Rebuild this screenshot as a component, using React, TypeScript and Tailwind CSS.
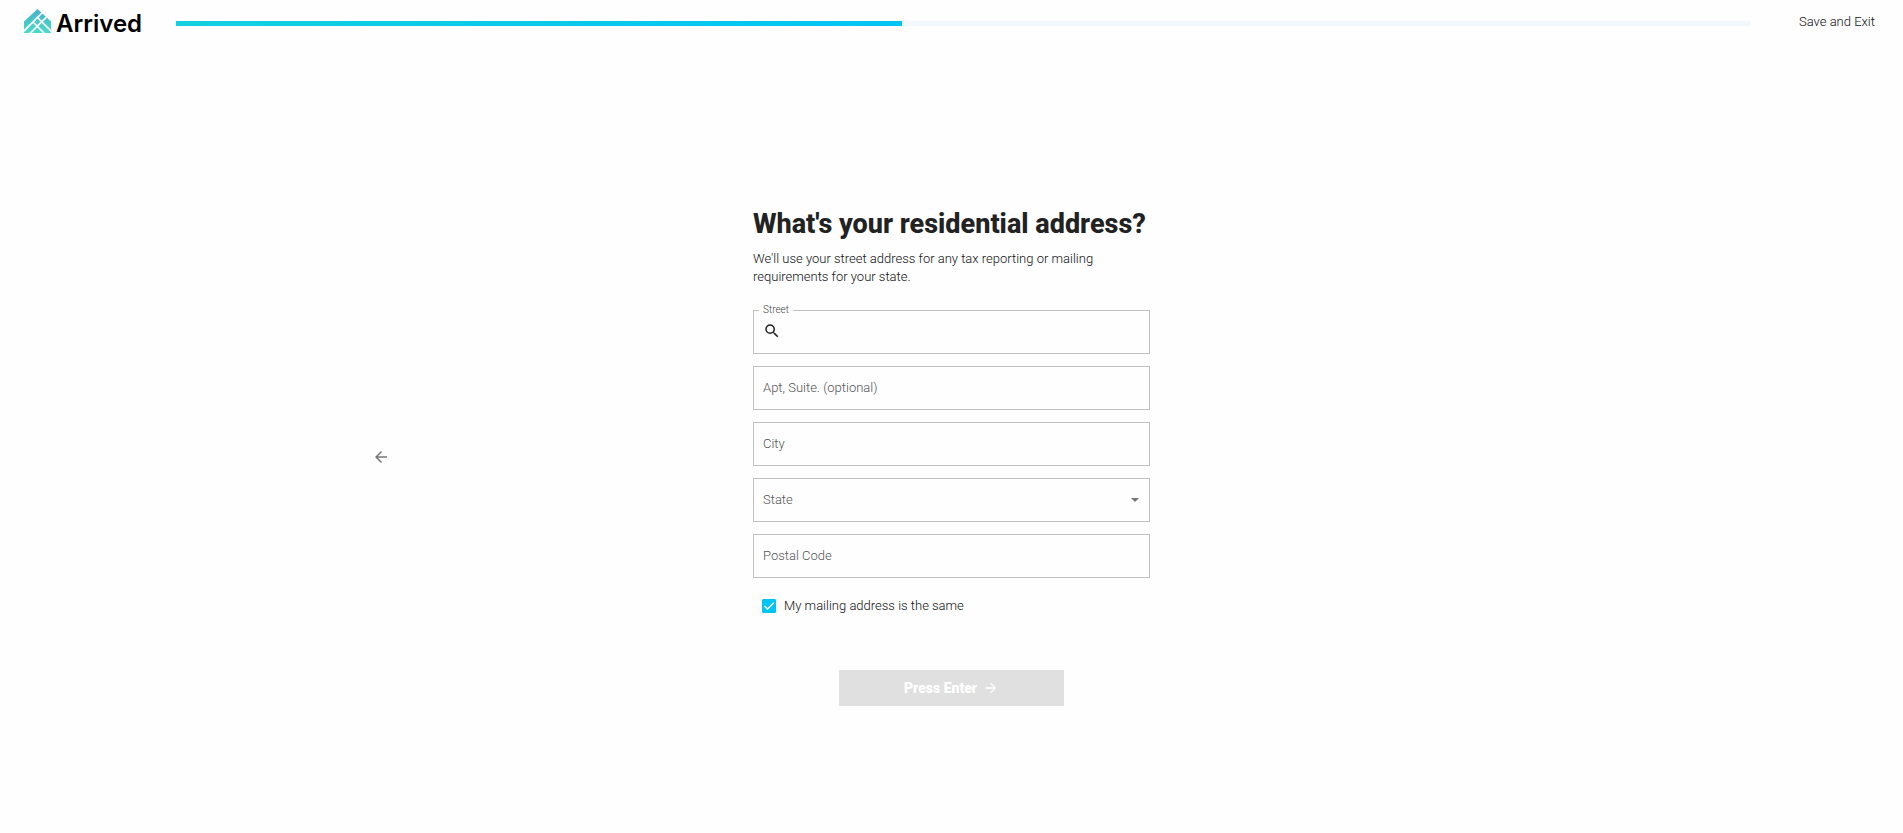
import { useState } from "react";
import type { ReactNode } from "react";

const BOX = "h-11 w-full border border-[#c0c0c0] bg-transparent px-[9px] text-[13px] text-[#222] outline-none focus:border-[#00c4f4]";
const LABEL = "pointer-events-none absolute inset-y-0 left-[10px] flex items-center text-[13px] font-light text-[#555]";

function Logo() {
  return (
    <a href="#home" className="flex items-start gap-[5px] text-black">
      <svg width="27" height="24" viewBox="0 0 27 24" aria-hidden="true">
        <defs>
          <linearGradient id="roof" x1="0" y1="0" x2="0" y2="1">
            <stop offset="0" stopColor="#46b0cc" />
            <stop offset="1" stopColor="#48dccb" />
          </linearGradient>
          <clipPath id="house">
            <path d="M13.5 0 L27 12.5 V24 H0 V12.5 Z" />
          </clipPath>
        </defs>
        <rect width="27" height="24" fill="url(#roof)" clipPath="url(#house)" />
        <g stroke="#fefefe" strokeWidth="1.7" fill="none">
          <path d="M-2 24 L22 0" />
          <path d="M5 25.5 L28 2.5" />
          <path d="M13 8 L30 25" />
          <path d="M8.5 12.5 L22 26" />
        </g>
      </svg>
      <span className="text-[24px] leading-[30px] font-semibold">Arrived</span>
    </a>
  );
}

function ProgressBar({ value }: { value: number }) {
  return (
    <div
      role="progressbar"
      aria-label="Application progress"
      aria-valuenow={value}
      aria-valuemin={0}
      aria-valuemax={100}
      className="mt-3 h-[5px] flex-1 bg-[#f1f9fd]"
    >
      <div className="h-full bg-linear-to-r from-[#14cfe0] to-[#00c4f4]" style={{ width: `${value}%` }} />
    </div>
  );
}

function TextField({ id, label }: { id: string; label: string }) {
  return (
    <div className="relative">
      <input id={id} type="text" placeholder=" " className={`peer ${BOX}`} />
      <label htmlFor={id} className={`${LABEL} peer-[:not(:placeholder-shown)]:hidden`}>{label}</label>
    </div>
  );
}

function StreetField() {
  return (
    <fieldset className="-mt-[6px] h-[50px] border border-[#c0c0c0] px-[5px]">
      <legend className="px-1 text-[10px] leading-3 font-light text-[#444]">
        <label htmlFor="street">Street</label>
      </legend>
      <div className="flex h-[30px] items-center gap-2 pl-1">
        <svg width="18" height="18" viewBox="0 0 24 24" fill="#222" aria-hidden="true">
          <path d="M15.5 14h-.79l-.28-.27A6.47 6.47 0 0 0 16 9.5 6.5 6.5 0 1 0 9.5 16c1.61 0 3.09-.59 4.23-1.57l.27.28v.79l5 4.99L20.49 19l-4.99-5zm-6 0C7.01 14 5 11.99 5 9.5S7.01 5 9.5 5 14 7.01 14 9.5 11.99 14 9.5 14z" />
        </svg>
        <input id="street" type="text" className="h-full min-w-0 flex-1 bg-transparent text-[13px] outline-none" />
      </div>
    </fieldset>
  );
}

function StateField() {
  const [state, setState] = useState("");
  return (
    <div className="relative">
      <select id="state" value={state} onChange={(e) => setState(e.target.value)} className={`${BOX} appearance-none`}>
        <option value=""></option>
        <option value="CA">California</option>
        <option value="NY">New York</option>
        <option value="WA">Washington</option>
      </select>
      <label htmlFor="state" className={state ? "hidden" : LABEL}>State</label>
      <svg className="pointer-events-none absolute inset-y-0 right-[11px] my-auto" width="8" height="4" viewBox="0 0 8 4" fill="#757575" aria-hidden="true">
        <path d="M0 0h8L4 4z" />
      </svg>
    </div>
  );
}

function Checkbox({ children }: { children: ReactNode }) {
  const [checked, setChecked] = useState(true);
  return (
    <label className="mt-5 flex items-center gap-2 pl-[9px] text-[13px] leading-4 font-light text-[#111]">
      <span className="relative flex">
        <input
          type="checkbox"
          checked={checked}
          onChange={(e) => setChecked(e.target.checked)}
          className="peer size-[14px] appearance-none rounded-[1px] border border-[#999] checked:border-[#00c4f4] checked:bg-[#00c4f4]"
        />
        <svg className="pointer-events-none absolute inset-0 hidden peer-checked:block" width="14" height="14" viewBox="0 0 14 14" fill="none" stroke="#fff" strokeWidth="1.5" aria-hidden="true">
          <path d="M2.5 7 L5.5 10 L11.8 3.7" />
        </svg>
      </span>
      {children}
    </label>
  );
}

function Arrow({ size, back = false }: { size: number; back?: boolean }) {
  return (
    <svg width={size} height={size} viewBox="0 0 24 24" fill="currentColor" aria-hidden="true">
      {back ? (
        <path d="M20 11H7.83l5.59-5.59L12 4l-8 8 8 8 1.41-1.41L7.83 13H20v-2z" />
      ) : (
        <path d="M12 4l-1.41 1.41L16.17 11H4v2h12.17l-5.58 5.59L12 20l8-8z" />
      )}
    </svg>
  );
}

export default function App() {
  return (
    <div className="flex min-h-screen flex-col bg-[#fefefe] font-['Roboto',sans-serif] text-[#222]">
      <header className="flex items-start pt-[9px] pr-[30px] pl-6">
        <div className="w-[152px] shrink-0 font-['Inter',sans-serif]">
          <Logo />
        </div>
        <ProgressBar value={46.1} />
        <button type="button" className="mt-1 ml-12 w-[74px] text-[13px] leading-[18px] font-light whitespace-nowrap text-[#111]">
          Save and Exit
        </button>
      </header>

      <main className="grid flex-1 grid-cols-[2fr_1fr_2fr] items-center pt-[42px]">
        <div className="flex justify-center pl-2">
          <button type="button" aria-label="Back" className="p-2 text-[#777]">
            <Arrow size={18} back />
          </button>
        </div>

        <form className="w-[397px]" onSubmit={(e) => e.preventDefault()}>
          <h1 className="text-[27px] leading-8 font-extrabold whitespace-nowrap">What's your residential address?</h1>
          <p className="mt-[10px] max-w-[350px] text-[13px] leading-[18px] font-light text-[#111]">
            We'll use your street address for any tax reporting or mailing requirements for your state.
          </p>
          <div className="mt-6 flex flex-col gap-3">
            <StreetField />
            <TextField id="apt" label="Apt, Suite. (optional)" />
            <TextField id="city" label="City" />
            <StateField />
            <TextField id="postal" label="Postal Code" />
          </div>
          <Checkbox>My mailing address is the same</Checkbox>
          <button type="submit" disabled className="mx-auto mt-14 flex h-9 w-[225px] items-center justify-center gap-[6px] bg-[#e0e0e0] text-[14px] font-black text-white">
            Press Enter
            <Arrow size={16} />
          </button>
        </form>
      </main>
    </div>
  );
}
